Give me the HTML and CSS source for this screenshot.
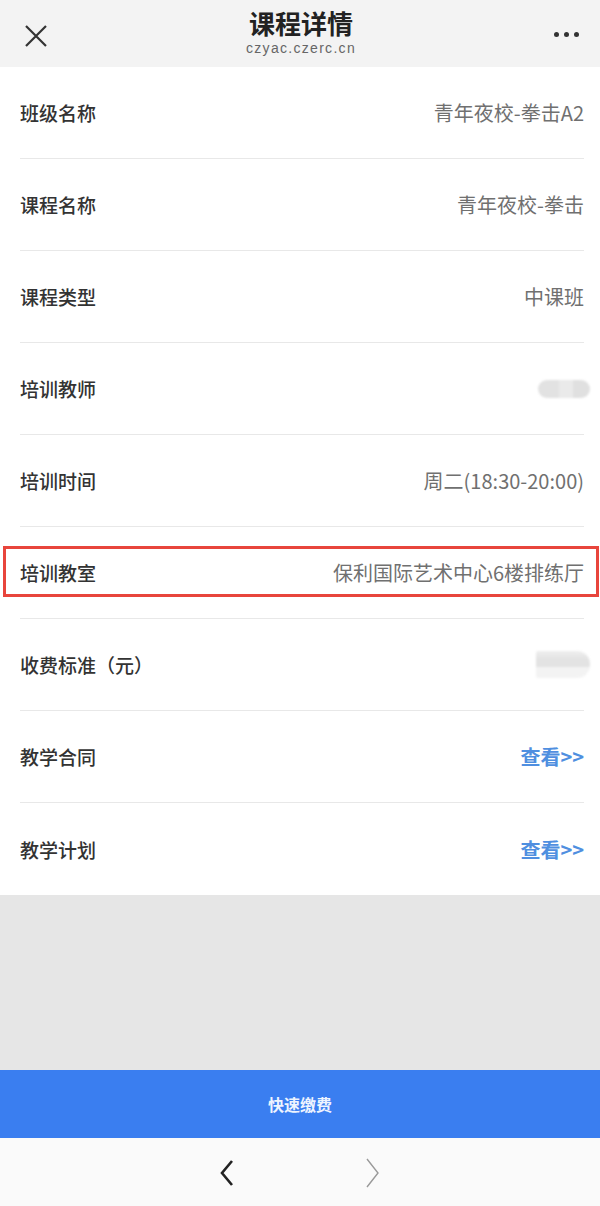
FILE: index.html
```html
<!DOCTYPE html>
<html lang="zh-CN">

<head>
    <meta charset="UTF-8">
    <meta name="viewport" content="width=device-width, initial-scale=1.0">
    <title>课程详情</title>
    <link rel="stylesheet" href="styles.css">
</head>

<body>
    <div class="page">
        <header class="topbar">
            <span class="close">
                <svg width="24" height="24" viewBox="0 0 24 24">
                    <path d="M2 2L22 22M22 2L2 22" stroke="#333" stroke-width="2.2" fill="none" />
                </svg>
            </span>
            <div class="title">
                <h1>课程详情</h1>
                <div class="host">czyac.czerc.cn</div>
            </div>
            <span class="more">
                <i></i><i></i><i></i>
            </span>
        </header>

        <main class="list">
            <div class="row">
                <span class="label">班级名称</span>
                <span class="value">青年夜校-拳击A2</span>
            </div>
            <div class="row">
                <span class="label">课程名称</span>
                <span class="value">青年夜校-拳击</span>
            </div>
            <div class="row">
                <span class="label">课程类型</span>
                <span class="value">中课班</span>
            </div>
            <div class="row">
                <span class="label">培训教师</span>
                <span class="value blur blur-teacher"></span>
            </div>
            <div class="row">
                <span class="label">培训时间</span>
                <span class="value">周二(18:30-20:00)</span>
            </div>
            <div class="row marked">
                <span class="label">培训教室</span>
                <span class="value">保利国际艺术中心6楼排练厅</span>
            </div>
            <div class="row">
                <span class="label">收费标准（元）</span>
                <span class="value blur blur-fee"></span>
            </div>
            <div class="row">
                <span class="label">教学合同</span>
                <a class="value link" href="#">查看&gt;&gt;</a>
            </div>
            <div class="row last">
                <span class="label">教学计划</span>
                <a class="value link" href="#">查看&gt;&gt;</a>
            </div>
        </main>

        <div class="filler"></div>

        <button class="pay">快速缴费</button>

        <nav class="toolbar">
            <svg width="20" height="30" viewBox="0 0 20 30">
                <path d="M14 3L4 15L14 27" stroke="#222" stroke-width="2.6" fill="none" />
            </svg>
            <svg width="20" height="32" viewBox="0 0 20 32">
                <path d="M5 2L16 16L5 30" stroke="#999" stroke-width="1.4" fill="none" />
            </svg>
        </nav>
    </div>
</body>

</html>
```

FILE: styles.css
```css
body {
    margin: 0;
    background-color: white;
    font-family: "Noto Sans CJK SC", "Liberation Sans", sans-serif;
}

.page {
    display: flex;
    flex-direction: column;
    height: 1206px;
    width: 600px;
}

.topbar {
    height: 67px;
    background-color: #f3f3f3;
    display: flex;
    align-items: center;
    justify-content: space-between;
    padding: 0 20px 0 24px;
    box-sizing: border-box;
}

.close {
    width: 24px;
    height: 24px;
    margin-top: 4px;
}

.title {
    text-align: center;
    margin-top: -2px;
}

.title h1 {
    margin: 0;
    font-size: 26px;
    line-height: 30px;
    font-weight: bold;
    color: #222;
}

.host {
    font-family: "Liberation Sans", sans-serif;
    font-size: 14px;
    letter-spacing: 1.3px;
    color: #666;
    line-height: 18px;
    margin-top: 1px;
}

.more {
    display: flex;
    gap: 5px;
    width: 26px;
    margin-top: 2px;
}

.more i {
    width: 5px;
    height: 5px;
    border-radius: 50%;
    background-color: #333;
}

.list {
    background-color: white;
}

.row {
    position: relative;
    height: 92px;
    margin: 0 16px 0 20px;
    display: flex;
    align-items: center;
    justify-content: space-between;
    border-bottom: 1px solid #e8e8e8;
    box-sizing: border-box;
}

.row.last {
    border-bottom: none;
}

.label {
    font-size: 19px;
    color: #333;
    font-weight: 500;
}

.value {
    font-size: 20px;
    color: #707070;
}

.link {
    color: #4f8fe0;
    font-weight: bold;
    text-decoration: none;
}

.marked::after {
    content: "";
    position: absolute;
    left: -17px;
    right: -15px;
    top: 19px;
    height: 51px;
    border: 3px solid #e8453c;
    box-sizing: border-box;
}

.blur {
    display: block;
    margin-right: -6px;
    filter: blur(1px);
}

.blur-teacher {
    width: 52px;
    height: 18px;
    border-radius: 9px;
    background: linear-gradient(90deg, #e2e2e2 0, #e2e2e2 40%, #eaeaea 40%, #eaeaea 68%, #e0e0e0 68%);
}

.blur-fee {
    width: 54px;
    height: 27px;
    border-radius: 2px 13px 13px 2px;
    background: linear-gradient(180deg, #efefef 0, #e3e3e3 30%, #e3e3e3 60%, #f3f3f3 60%);
}

.filler {
    flex: 1;
    background-color: #e6e6e6;
}

.pay {
    height: 68px;
    border: none;
    background-color: #3a7ef0;
    color: #eef4ff;
    font-family: "Noto Sans CJK SC", sans-serif;
    font-size: 16px;
    font-weight: bold;
    padding: 0;
}

.toolbar {
    height: 68px;
    background-color: #fafafa;
    display: flex;
    align-items: center;
    justify-content: center;
    gap: 124px;
    padding-top: 2px;
    box-sizing: border-box;
}
```
